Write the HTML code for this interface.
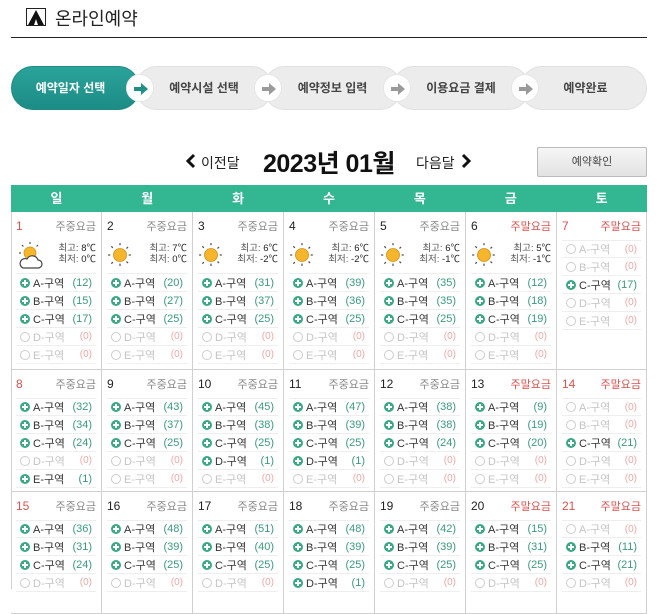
<!DOCTYPE html>
<html><head><meta charset="utf-8">
<style>
*{margin:0;padding:0;box-sizing:border-box}
body{width:658px;height:589px;overflow:hidden;background:#fff;font-family:"Liberation Sans","Noto Sans CJK KR",sans-serif;position:relative;color:#333}
.abs{position:absolute}
.title{left:55px;top:5px;font-size:18px;color:#222}
.hr{left:11px;top:37px;width:636px;height:1px;background:#222}
.pill{position:absolute;top:66px;height:44px;border-radius:22px;background:#ececec;border:1px solid #e0e0e0;font-size:12px;font-weight:bold;color:#444;line-height:42px;text-align:center}
.pill.on{background:linear-gradient(#2aa39a,#1c8c85);border-color:#1c8c85;color:#fff}
.arr{position:absolute;top:74px;width:28px;height:28px;border-radius:50%;background:#fff;border:1px solid #e6e6e6}
.arr svg{position:absolute;left:4px;top:4px}
.hd{position:absolute;top:185px;left:11px;width:636px;height:27px;background:#33b793;display:flex}
.hd div{width:91px;text-align:center;color:#fff;font-weight:bold;font-size:13px;line-height:27px}
.c{position:absolute;width:91px;border-right:1px solid #d0d0d0;border-bottom:1px solid #d0d0d0;padding:0 5px}
.dt{height:28px;display:flex;justify-content:space-between;align-items:center;font-size:11px}
.dt b{font-weight:normal;color:#222;font-size:12px}
.dt span{color:#888}
.dt.red b{color:#d9534f}
.dt .we{color:#d9534f}
.w{height:34px;position:relative;border-bottom:1px solid #eee}
.w svg{position:absolute;left:0;top:2px}
.w .t{position:absolute;right:0;top:3px;font-size:9.5px;line-height:11px;text-align:right;color:#555}
.w .t i{font-style:normal;color:#222}
.z{height:18px;border-bottom:1px solid #eee;display:flex;align-items:center;font-size:11px;padding:0 4px}
.z .ic{width:10px;height:10px;border-radius:50%;background:#3aa983;position:relative;margin-right:3px;flex:none}
.z .ic:before{content:"";position:absolute;left:2px;top:4px;width:6px;height:2px;background:#fff}
.z .ic:after{content:"";position:absolute;left:4px;top:2px;width:2px;height:6px;background:#fff}
.z .n{margin-left:auto;color:#3a9a80}
.z.off{color:#c4c4c4}
.z.off .ic{background:none;border:1px solid #ccc}
.z.off .ic:before,.z.off .ic:after{display:none}
.z.off .n{color:#f0a8a8;font-size:10px}
.ft{border-top:1px solid #eee}
</style></head><body>
<svg class="abs" style="left:26px;top:8px" width="20" height="18" viewBox="0 0 20 18"><rect x="0.5" y="0.5" width="19" height="17" fill="#fff" stroke="#222"/><path d="M10 2 L18 17 L2 17 Z" fill="#111"/><path d="M10 11 L12 17 L8 17Z" fill="#fff"/></svg>
<div class="abs title">온라인예약</div>
<div class="abs hr"></div>

<div class="pill" style="left:520px;width:127px;padding-left:4px">예약완료</div>
<div class="pill" style="left:392px;width:138px">이용요금 결제</div>
<div class="pill" style="left:263px;width:139px">예약정보 입력</div>
<div class="pill" style="left:135px;width:138px">예약시설 선택</div>
<div class="pill on" style="left:11px;width:129px;padding-right:10px">예약일자 선택</div>
<div class="arr" style="left:126px"><svg width="20" height="20" viewBox="0 0 20 20"><path d="M3 8h7V4l7 6-7 6v-4H3z" fill="#1e9088"/></svg></div>
<div class="arr" style="left:254px"><svg width="20" height="20" viewBox="0 0 20 20"><path d="M3 8h7V4l7 6-7 6v-4H3z" fill="#9a9a9a"/></svg></div>
<div class="arr" style="left:383px"><svg width="20" height="20" viewBox="0 0 20 20"><path d="M3 8h7V4l7 6-7 6v-4H3z" fill="#9a9a9a"/></svg></div>
<div class="arr" style="left:511px"><svg width="20" height="20" viewBox="0 0 20 20"><path d="M3 8h7V4l7 6-7 6v-4H3z" fill="#9a9a9a"/></svg></div>

<svg class="abs" style="left:184px;top:153px" width="14" height="16" viewBox="0 0 14 16"><path d="M10 2 L4 8 L10 14" fill="none" stroke="#111" stroke-width="3"/></svg>
<div class="abs" style="left:201px;top:153px;font-size:14px;color:#222">이전달</div>
<div class="abs" style="left:263px;top:144px;font-size:25px;font-weight:bold;color:#111;letter-spacing:-0.5px">2023년 01월</div>
<div class="abs" style="left:416px;top:153px;font-size:14px;color:#222">다음달</div>
<svg class="abs" style="left:459px;top:153px" width="14" height="16" viewBox="0 0 14 16"><path d="M4 2 L10 8 L4 14" fill="none" stroke="#111" stroke-width="3"/></svg>
<div class="abs" style="left:537px;top:147px;width:110px;height:30px;border:1px solid #bbb;border-radius:2px;background:linear-gradient(#f6f6f6,#e2e2e2);font-size:11px;text-align:center;line-height:28px;color:#444">예약확인</div>

<div class="hd"><div>일</div><div>월</div><div>화</div><div>수</div><div>목</div><div>금</div><div>토</div></div>
<div class="abs" style="left:11px;top:212px;width:1px;height:377px;background:#d0d0d0"></div>

<svg width="0" height="0" style="position:absolute"><defs>
<g id="sun"><circle cx="12" cy="12" r="6" fill="#f6b62b" stroke="#d9901a" stroke-width="0.8"/><g stroke="#555" stroke-width="1.2" stroke-dasharray="2 2"><path d="M12 1v3M12 20v3M1 12h3M20 12h3M4 4l2 2M18 18l2 2M4 20l2-2M18 6l2-2"/></g></g>
</defs></svg>

<!-- Week 1 -->
<div class="c" style="left:11px;top:212px;height:158px"><div class="dt red"><b>1</b><span>주중요금</span></div>
<div class="w"><svg width="30" height="30" viewBox="0 0 30 30"><circle cx="14" cy="11" r="6" fill="#f6b62b" stroke="#d9901a" stroke-width="0.8"/><g stroke="#555" stroke-width="1.2" stroke-dasharray="2 2"><path d="M14 0v3M3 11h3M6 3l2 2M22 3l-2 2"/></g><path d="M7 26h15a4 4 0 0 0 0-8 6 6 0 0 0-11-1 4.5 4.5 0 0 0-4 9z" fill="#fff" stroke="#444" stroke-width="1.2"/></svg><div class="t">최고: <i>8℃</i><br>최저: <i>0℃</i></div></div>
<div class="z"><span class="ic"></span>A-구역<span class="n">(12)</span></div><div class="z"><span class="ic"></span>B-구역<span class="n">(15)</span></div><div class="z"><span class="ic"></span>C-구역<span class="n">(17)</span></div><div class="z off"><span class="ic"></span>D-구역<span class="n">(0)</span></div><div class="z off"><span class="ic"></span>E-구역<span class="n">(0)</span></div></div>

<div class="c" style="left:102px;top:212px;height:158px"><div class="dt"><b>2</b><span>주중요금</span></div>
<div class="w"><svg width="26" height="26" viewBox="0 0 24 24"><use href="#sun"/></svg><div class="t">최고: <i>7℃</i><br>최저: <i>0℃</i></div></div>
<div class="z"><span class="ic"></span>A-구역<span class="n">(20)</span></div><div class="z"><span class="ic"></span>B-구역<span class="n">(27)</span></div><div class="z"><span class="ic"></span>C-구역<span class="n">(25)</span></div><div class="z off"><span class="ic"></span>D-구역<span class="n">(0)</span></div><div class="z off"><span class="ic"></span>E-구역<span class="n">(0)</span></div></div>

<div class="c" style="left:193px;top:212px;height:158px"><div class="dt"><b>3</b><span>주중요금</span></div>
<div class="w"><svg width="26" height="26" viewBox="0 0 24 24"><use href="#sun"/></svg><div class="t">최고: <i>6℃</i><br>최저: <i>-2℃</i></div></div>
<div class="z"><span class="ic"></span>A-구역<span class="n">(31)</span></div><div class="z"><span class="ic"></span>B-구역<span class="n">(37)</span></div><div class="z"><span class="ic"></span>C-구역<span class="n">(25)</span></div><div class="z off"><span class="ic"></span>D-구역<span class="n">(0)</span></div><div class="z off"><span class="ic"></span>E-구역<span class="n">(0)</span></div></div>

<div class="c" style="left:284px;top:212px;height:158px"><div class="dt"><b>4</b><span>주중요금</span></div>
<div class="w"><svg width="26" height="26" viewBox="0 0 24 24"><use href="#sun"/></svg><div class="t">최고: <i>6℃</i><br>최저: <i>-2℃</i></div></div>
<div class="z"><span class="ic"></span>A-구역<span class="n">(39)</span></div><div class="z"><span class="ic"></span>B-구역<span class="n">(36)</span></div><div class="z"><span class="ic"></span>C-구역<span class="n">(25)</span></div><div class="z off"><span class="ic"></span>D-구역<span class="n">(0)</span></div><div class="z off"><span class="ic"></span>E-구역<span class="n">(0)</span></div></div>

<div class="c" style="left:375px;top:212px;height:158px"><div class="dt"><b>5</b><span>주중요금</span></div>
<div class="w"><svg width="26" height="26" viewBox="0 0 24 24"><use href="#sun"/></svg><div class="t">최고: <i>6℃</i><br>최저: <i>-1℃</i></div></div>
<div class="z"><span class="ic"></span>A-구역<span class="n">(35)</span></div><div class="z"><span class="ic"></span>B-구역<span class="n">(35)</span></div><div class="z"><span class="ic"></span>C-구역<span class="n">(25)</span></div><div class="z off"><span class="ic"></span>D-구역<span class="n">(0)</span></div><div class="z off"><span class="ic"></span>E-구역<span class="n">(0)</span></div></div>

<div class="c" style="left:466px;top:212px;height:158px"><div class="dt"><b>6</b><span class="we">주말요금</span></div>
<div class="w"><svg width="26" height="26" viewBox="0 0 24 24"><use href="#sun"/></svg><div class="t">최고: <i>5℃</i><br>최저: <i>-1℃</i></div></div>
<div class="z"><span class="ic"></span>A-구역<span class="n">(12)</span></div><div class="z"><span class="ic"></span>B-구역<span class="n">(18)</span></div><div class="z"><span class="ic"></span>C-구역<span class="n">(19)</span></div><div class="z off"><span class="ic"></span>D-구역<span class="n">(0)</span></div><div class="z off"><span class="ic"></span>E-구역<span class="n">(0)</span></div></div>

<div class="c" style="left:557px;top:212px;height:158px;width:90px"><div class="dt red"><b>7</b><span class="we">주말요금</span></div>
<div class="z ft off"><span class="ic"></span>A-구역<span class="n">(0)</span></div><div class="z off"><span class="ic"></span>B-구역<span class="n">(0)</span></div><div class="z"><span class="ic"></span>C-구역<span class="n">(17)</span></div><div class="z off"><span class="ic"></span>D-구역<span class="n">(0)</span></div><div class="z off"><span class="ic"></span>E-구역<span class="n">(0)</span></div></div>

<!-- Week 2 -->
<div class="c" style="left:11px;top:370px;height:122px"><div class="dt red"><b>8</b><span>주중요금</span></div>
<div class="z ft"><span class="ic"></span>A-구역<span class="n">(32)</span></div><div class="z"><span class="ic"></span>B-구역<span class="n">(34)</span></div><div class="z"><span class="ic"></span>C-구역<span class="n">(24)</span></div><div class="z off"><span class="ic"></span>D-구역<span class="n">(0)</span></div><div class="z"><span class="ic"></span>E-구역<span class="n">(1)</span></div></div>

<div class="c" style="left:102px;top:370px;height:122px"><div class="dt"><b>9</b><span>주중요금</span></div>
<div class="z ft"><span class="ic"></span>A-구역<span class="n">(43)</span></div><div class="z"><span class="ic"></span>B-구역<span class="n">(37)</span></div><div class="z"><span class="ic"></span>C-구역<span class="n">(25)</span></div><div class="z off"><span class="ic"></span>D-구역<span class="n">(0)</span></div><div class="z off"><span class="ic"></span>E-구역<span class="n">(0)</span></div></div>

<div class="c" style="left:193px;top:370px;height:122px"><div class="dt"><b>10</b><span>주중요금</span></div>
<div class="z ft"><span class="ic"></span>A-구역<span class="n">(45)</span></div><div class="z"><span class="ic"></span>B-구역<span class="n">(38)</span></div><div class="z"><span class="ic"></span>C-구역<span class="n">(25)</span></div><div class="z"><span class="ic"></span>D-구역<span class="n">(1)</span></div><div class="z off"><span class="ic"></span>E-구역<span class="n">(0)</span></div></div>

<div class="c" style="left:284px;top:370px;height:122px"><div class="dt"><b>11</b><span>주중요금</span></div>
<div class="z ft"><span class="ic"></span>A-구역<span class="n">(47)</span></div><div class="z"><span class="ic"></span>B-구역<span class="n">(39)</span></div><div class="z"><span class="ic"></span>C-구역<span class="n">(25)</span></div><div class="z"><span class="ic"></span>D-구역<span class="n">(1)</span></div><div class="z off"><span class="ic"></span>E-구역<span class="n">(0)</span></div></div>

<div class="c" style="left:375px;top:370px;height:122px"><div class="dt"><b>12</b><span>주중요금</span></div>
<div class="z ft"><span class="ic"></span>A-구역<span class="n">(38)</span></div><div class="z"><span class="ic"></span>B-구역<span class="n">(38)</span></div><div class="z"><span class="ic"></span>C-구역<span class="n">(24)</span></div><div class="z off"><span class="ic"></span>D-구역<span class="n">(0)</span></div><div class="z off"><span class="ic"></span>E-구역<span class="n">(0)</span></div></div>

<div class="c" style="left:466px;top:370px;height:122px"><div class="dt"><b>13</b><span class="we">주말요금</span></div>
<div class="z ft"><span class="ic"></span>A-구역<span class="n">(9)</span></div><div class="z"><span class="ic"></span>B-구역<span class="n">(19)</span></div><div class="z"><span class="ic"></span>C-구역<span class="n">(20)</span></div><div class="z off"><span class="ic"></span>D-구역<span class="n">(0)</span></div><div class="z off"><span class="ic"></span>E-구역<span class="n">(0)</span></div></div>

<div class="c" style="left:557px;top:370px;height:122px;width:90px"><div class="dt red"><b>14</b><span class="we">주말요금</span></div>
<div class="z ft off"><span class="ic"></span>A-구역<span class="n">(0)</span></div><div class="z off"><span class="ic"></span>B-구역<span class="n">(0)</span></div><div class="z"><span class="ic"></span>C-구역<span class="n">(21)</span></div><div class="z off"><span class="ic"></span>D-구역<span class="n">(0)</span></div><div class="z off"><span class="ic"></span>E-구역<span class="n">(0)</span></div></div>

<!-- Week 3 -->
<div class="c" style="left:11px;top:492px;height:122px"><div class="dt red"><b>15</b><span>주중요금</span></div>
<div class="z ft"><span class="ic"></span>A-구역<span class="n">(36)</span></div><div class="z"><span class="ic"></span>B-구역<span class="n">(31)</span></div><div class="z"><span class="ic"></span>C-구역<span class="n">(24)</span></div><div class="z off"><span class="ic"></span>D-구역<span class="n">(0)</span></div></div>

<div class="c" style="left:102px;top:492px;height:122px"><div class="dt"><b>16</b><span>주중요금</span></div>
<div class="z ft"><span class="ic"></span>A-구역<span class="n">(48)</span></div><div class="z"><span class="ic"></span>B-구역<span class="n">(39)</span></div><div class="z"><span class="ic"></span>C-구역<span class="n">(25)</span></div><div class="z off"><span class="ic"></span>D-구역<span class="n">(0)</span></div></div>

<div class="c" style="left:193px;top:492px;height:122px"><div class="dt"><b>17</b><span>주중요금</span></div>
<div class="z ft"><span class="ic"></span>A-구역<span class="n">(51)</span></div><div class="z"><span class="ic"></span>B-구역<span class="n">(40)</span></div><div class="z"><span class="ic"></span>C-구역<span class="n">(25)</span></div><div class="z off"><span class="ic"></span>D-구역<span class="n">(0)</span></div></div>

<div class="c" style="left:284px;top:492px;height:122px"><div class="dt"><b>18</b><span>주중요금</span></div>
<div class="z ft"><span class="ic"></span>A-구역<span class="n">(48)</span></div><div class="z"><span class="ic"></span>B-구역<span class="n">(39)</span></div><div class="z"><span class="ic"></span>C-구역<span class="n">(25)</span></div><div class="z"><span class="ic"></span>D-구역<span class="n">(1)</span></div></div>

<div class="c" style="left:375px;top:492px;height:122px"><div class="dt"><b>19</b><span>주중요금</span></div>
<div class="z ft"><span class="ic"></span>A-구역<span class="n">(42)</span></div><div class="z"><span class="ic"></span>B-구역<span class="n">(39)</span></div><div class="z"><span class="ic"></span>C-구역<span class="n">(25)</span></div><div class="z off"><span class="ic"></span>D-구역<span class="n">(0)</span></div></div>

<div class="c" style="left:466px;top:492px;height:122px"><div class="dt"><b>20</b><span class="we">주말요금</span></div>
<div class="z ft"><span class="ic"></span>A-구역<span class="n">(15)</span></div><div class="z"><span class="ic"></span>B-구역<span class="n">(31)</span></div><div class="z"><span class="ic"></span>C-구역<span class="n">(25)</span></div><div class="z off"><span class="ic"></span>D-구역<span class="n">(0)</span></div></div>

<div class="c" style="left:557px;top:492px;height:122px;width:90px"><div class="dt red"><b>21</b><span class="we">주말요금</span></div>
<div class="z ft off"><span class="ic"></span>A-구역<span class="n">(0)</span></div><div class="z"><span class="ic"></span>B-구역<span class="n">(11)</span></div><div class="z"><span class="ic"></span>C-구역<span class="n">(21)</span></div><div class="z off"><span class="ic"></span>D-구역<span class="n">(0)</span></div></div>
</body></html>
